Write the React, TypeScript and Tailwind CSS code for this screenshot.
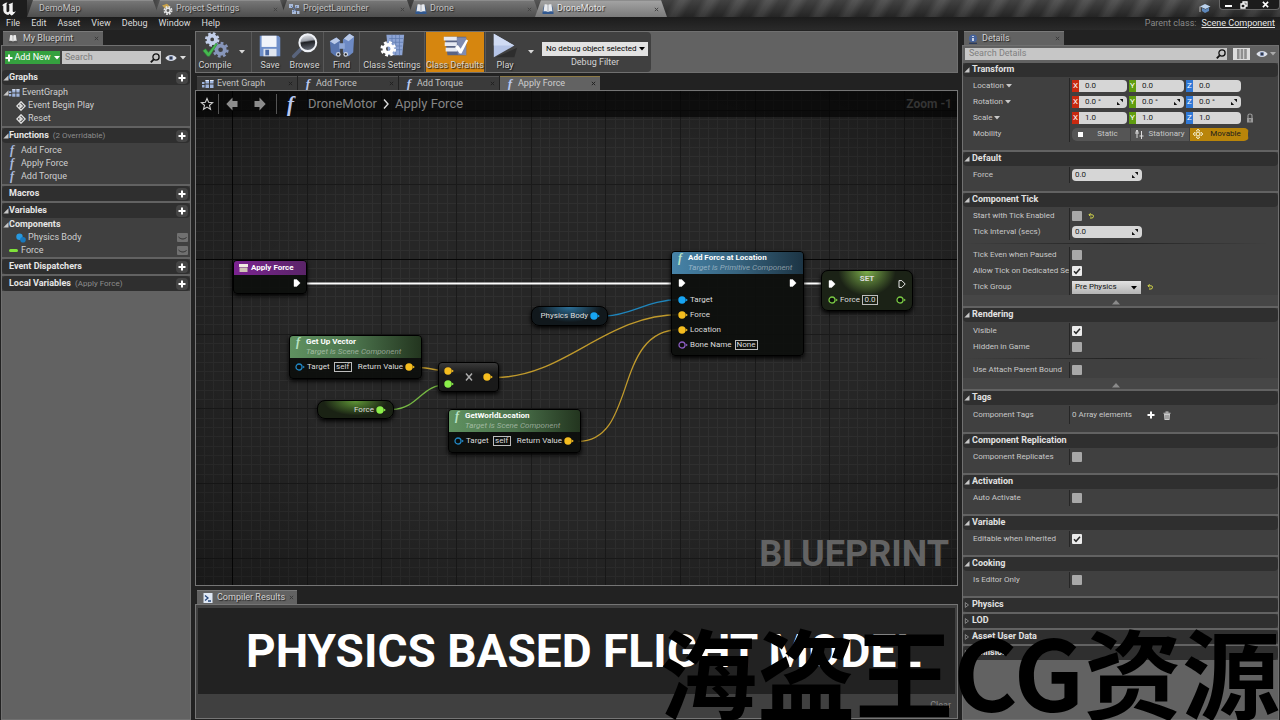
import { useState } from 'react';
import type { ReactNode } from 'react';
import clsx from 'clsx';

type IconProps = { className?: string };

/* ---------- icons ---------- */

function FunctionIcon({ className }: IconProps) {
  return (
    <span aria-hidden="true" className={clsx("font-['Liberation_Serif',serif] font-bold italic", className)}>
      f
    </span>
  );
}

function EngineLogo() {
  return (
    <svg viewBox="0 0 18 14" className="ml-px h-3.5 w-[18px]" fill="#f2f2f2" aria-hidden="true">
      <path d="M1 3.5C2.5 1.8 4 .9 6.6.6 5.6 1.4 5.5 2 5.5 3v6c0 1 .9 1.4 1.7 1 .6-.3.9-.6 1.1-.9V3.6c0-.8-.3-1.1-1-1.3C9 2 10.6 1.4 12 .5c-.3.8-.3 1.3-.3 2v6.6c0 .8.5 1.2 1.5.8.7-.2 1.2-.6 1.6-1-.9 2.2-2.6 3.900-4.500 4.600L8.600 11.700 7.300 13C4.600 12.700 2.500 11.100 2.300 8.600V4.400C2.300 3.500 1.900 3.300 1 3.500z" />
    </svg>
  );
}

function BookIcon({ className }: IconProps) {
  return (
    <svg viewBox="0 0 12 12" className={className} aria-hidden="true">
      <path d="M.5 9.500 2 2.500h8l1.500 7v1.500H.5z" fill="#31588f" />
      <path d="M1.500 8.500 2.500 1.500C4 1 5 1.200 6 2c1-.8 2-1 3.500-.5l1 7C9 8 7 8 6 9 5 8 3 8 1.500 8.500z" fill="#e8eaee" />
      <path d="M6 2v6.500" stroke="#8a8f9a" strokeWidth=".7" />
    </svg>
  );
}

function GearTabIcon({ className }: IconProps) {
  return (
    <svg viewBox="0 0 12 12" className={className} aria-hidden="true">
      <path d="M1 2.500 6 .8l3 2.700-5 2z" fill="#c9a24a" />
      <circle cx="7" cy="7.500" r="3.600" fill="none" stroke="#e6e6e6" strokeWidth="1.800" strokeDasharray="1.700 1.130" />
      <circle cx="7" cy="7.500" r="2.200" fill="none" stroke="#e6e6e6" strokeWidth="1.500" />
    </svg>
  );
}

function LauncherIcon({ className }: IconProps) {
  return (
    <svg viewBox="0 0 12 12" className={className} fill="#a9bad8" aria-hidden="true">
      <path d="M1 1h4v4H1zM7 2h4v3H7zM4 7h4v4H4zM9 8h2.500v3H9z" />
      <path d="M3 3l6 6M9 3 5 9" stroke="#5f78a8" fill="none" />
    </svg>
  );
}

function EventGraphIcon({ className }: IconProps) {
  return (
    <svg viewBox="0 0 12 10" className={className} aria-hidden="true">
      <path d="M0 3h2.500v2H0zM3.500 1h3.500v3.500h-3.500zM8 1h3.500v3.500h-3.500zM0 6h2.500v2.500H0zM3.500 5.500h3.500v3.500h-3.500zM8 5.500h3.500v3.500h-3.500z" fill="#9fb4dc" />
      <path d="M3.500 1h3.500v1h-3.500zM8 1h3.500v1h-3.500z" fill="#e4ebf8" />
    </svg>
  );
}

function EyeIcon({ className }: IconProps) {
  return (
    <svg viewBox="0 0 12 8" className={className} aria-hidden="true">
      <path d="M.3 4C3 0 9 0 11.700 4 9 8 3 8 .3 4z" fill="#dfe3ec" />
      <circle cx="6" cy="4" r="2.200" fill="#6f7fa3" />
      <circle cx="6" cy="4" r="1" fill="#20242e" />
    </svg>
  );
}

function Magnifier({ className }: IconProps) {
  return (
    <svg viewBox="0 0 10 10" className={className} fill="none" stroke="#111" aria-hidden="true">
      <circle cx="6" cy="4" r="3.100" strokeWidth="1.300" />
      <path d="M3.700 6.400.8 9.300" strokeWidth="1.900" />
    </svg>
  );
}

function Caret({ className }: IconProps) {
  return (
    <svg viewBox="0 0 6 4" className={clsx('h-1 w-1.5 shrink-0', className)} fill="currentColor" aria-hidden="true">
      <path d="M0 0h6L3 3.600z" />
    </svg>
  );
}

function OpenMark({ open = true }: { open?: boolean }) {
  return (
    <svg viewBox="0 0 6 6" className="h-1.5 w-1.5 shrink-0" aria-hidden="true">
      {open ? <path d="M5.500 .3v5.200H.3z" fill="#c8c8c8" /> : <path d="M1.300.6v4.800L4.500 3z" fill="none" stroke="#9a9a9a" strokeWidth=".8" />}
    </svg>
  );
}

function Plus({ className }: IconProps) {
  return (
    <svg viewBox="0 0 8 8" className={clsx('h-2 w-2', className)} fill="#fff" aria-hidden="true">
      <path d="M3 .5h2V3h2.500v2H5v2.500H3V5H.5V3H3z" />
    </svg>
  );
}

function CloseMark({ className }: IconProps) {
  return (
    <svg viewBox="0 0 6 6" className={clsx('h-[5px] w-[5px] shrink-0', className)} stroke="currentColor" strokeWidth="1.200" aria-hidden="true">
      <path d="m1 1 4 4M5 1 1 5" />
    </svg>
  );
}

function SpinMark() {
  return (
    <svg viewBox="0 0 6 6" className="pointer-events-none absolute right-1 top-[3px] h-1.5 w-1.5" fill="#111" aria-hidden="true">
      <path d="M2.800 0H6v3.200zM3.200 6H0V2.800z" />
    </svg>
  );
}

function ResetArrow() {
  return (
    <svg viewBox="0 0 6 6" className="h-1.5 w-1.5" fill="none" stroke="#d6d84a" strokeWidth="1" aria-hidden="true">
      <path d="M1 1.800h3.200q1.300 0 1.300 1.500T4 5H2M2.600.2 1 1.800l1.600 1.600" />
    </svg>
  );
}

function CompileIcon() {
  return (
    <svg viewBox="0 0 30 30" className="h-7 w-7" aria-hidden="true">
      <circle cx="12" cy="8" r="4" fill="none" stroke="#c3cfea" strokeWidth="4" />
      <circle cx="12" cy="8" r="6.500" fill="none" stroke="#c3cfea" strokeWidth="2.500" strokeDasharray="2.800 2.300" />
      <circle cx="21" cy="19" r="4.500" fill="none" stroke="#8796bb" strokeWidth="4" />
      <circle cx="21" cy="19" r="7.300" fill="none" stroke="#8796bb" strokeWidth="2.600" strokeDasharray="3 2.700" />
      <path d="M2 20l3-2 3 4 8-10 1.500 1L9 26H7z" fill="#46b84f" stroke="#2d8a38" strokeWidth=".6" />
    </svg>
  );
}

function SaveIcon() {
  return (
    <svg viewBox="0 0 30 30" className="h-7 w-7" aria-hidden="true">
      <path d="M4 4h20l2 2v20H4z" fill="#6f8fc9" />
      <path d="M6 4h16v12H6z" fill="#f1f4fa" />
      <path d="M8 18h14v8H8z" fill="#dfe5f0" />
      <path d="M10 19h4v6h-4z" fill="#4c6aa5" />
    </svg>
  );
}

function BrowseIcon() {
  return (
    <svg viewBox="0 0 30 30" className="h-7 w-7" aria-hidden="true">
      <defs>
        <linearGradient id="lens" x1="0" y1="0" x2=".15" y2="1">
          <stop offset="0" stopColor="#f4f5f8" />
          <stop offset=".42" stopColor="#9ea3ac" />
          <stop offset=".52" stopColor="#1f2126" />
          <stop offset="1" stopColor="#666c78" />
        </linearGradient>
      </defs>
      <path d="M11 18 3 26" stroke="#59647c" strokeWidth="4" strokeLinecap="round" />
      <circle cx="18" cy="11.500" r="9" fill="url(#lens)" stroke="#eef1f6" strokeWidth="2.200" />
    </svg>
  );
}

function FindIcon() {
  return (
    <svg viewBox="0 0 30 30" className="h-7 w-7" aria-hidden="true">
      <path d="M2 10l7-4 4 3v14l-5 3-5-4z" fill="#5874ad" />
      <path d="M16 8l7-6 5 3-1 17-5 4-6-4z" fill="#6d8ac4" />
      <path d="M2 10l7-4 4 3-6 4zM17 7l6-5 5 3-6 5z" fill="#b9c9e8" />
      <path d="M12 12h6v6h-6z" fill="#8fa7d6" />
      <circle cx="11" cy="24" r="2.500" fill="#cfd6e3" />
      <circle cx="11" cy="24" r="1.200" fill="#222" />
      <circle cx="19" cy="24" r="2.500" fill="#cfd6e3" />
      <circle cx="19" cy="24" r="1.200" fill="#222" />
    </svg>
  );
}

function ClassSettingsIcon() {
  return (
    <svg viewBox="0 0 30 30" className="h-7 w-7" aria-hidden="true">
      <path d="M9 3h19l-2 22H11z" fill="#8da4d4" />
      <path d="M12 7h15M12 11h15M12 15h14M12 19h14M15 3v22M19 3v22M23 3v22" stroke="#5f7ab0" strokeWidth=".8" />
      <circle cx="11" cy="18" r="4.300" fill="none" stroke="#fff" strokeWidth="3.800" />
      <circle cx="11" cy="18" r="7" fill="none" stroke="#fff" strokeWidth="2.800" strokeDasharray="3 2.500" />
    </svg>
  );
}

function ClassDefaultsIcon() {
  return (
    <svg viewBox="0 0 30 30" className="h-7 w-7" aria-hidden="true">
      <path d="M4 5h23v20H7z" fill="#5a6484" />
      <path d="M3 5h14v4H3zM4 11h13v4H4zM5 17h13v4H5z" fill="#e6e9f2" />
      <path d="M17 6h10v19l-9-1z" fill="#7f8bb0" />
      <path d="m15 16 3-2 3 4 6-10 2 1-7 14h-2z" fill="#fff" />
    </svg>
  );
}

function PlayIcon() {
  return (
    <svg viewBox="0 0 30 30" className="h-7 w-7" aria-hidden="true">
      <path d="M5 27h20l3-10z" fill="#222" opacity=".6" />
      <path d="M3 2v25l22-12.500z" fill="#b5c4e6" />
      <path d="M3 2v12.500h22z" fill="#d0dbf3" />
    </svg>
  );
}

/* ---------- top of the window ---------- */

const windowTabs = [
  { label: 'DemoMap', icon: null },
  { label: 'Project Settings', icon: <GearTabIcon className="h-3 w-3" /> },
  { label: 'ProjectLauncher', icon: <LauncherIcon className="h-3 w-3" /> },
  { label: 'Drone', icon: <BookIcon className="h-3 w-3" /> },
  { label: 'DroneMotor', icon: <BookIcon className="h-3 w-3" />, active: true },
];

function TitleBar() {
  return (
    <header className="flex h-[17px] shrink-0 items-stretch bg-[repeating-linear-gradient(120deg,#2a2a2a99_0px,#2a2a2a99_8px,#4a4a4a99_14px,#4a4a4a99_18px,#2a2a2a99_25px),linear-gradient(#666,#1c1c1c)]">
      <div className="flex w-[27px] items-center bg-[#1d1d1d]">
        <EngineLogo />
      </div>
      <nav className="flex" aria-label="Open assets">
        {windowTabs.map((tab) => (
          <button
            key={tab.label}
            className={clsx(
              '-mr-[5px] flex w-[132px] items-center gap-[3px] border-t border-[#8c8c8c] pl-[7px] pr-2 text-left text-[9px] [clip-path:polygon(6px_0,calc(100%-6px)_0,100%_100%,0_100%)]',
              tab.active ? 'bg-gradient-to-b from-[#a2a2a2] to-[#7b7b7b] text-[#e6e6e6]' : 'bg-gradient-to-b from-[#767676] to-[#4e4e4e] text-[#c4c4c4]',
            )}
          >
            {tab.icon ?? <span className="w-0.5" />}
            <span className="[text-shadow:1px_1px_1px_#222]">{tab.label}</span>
            <CloseMark className={clsx('ml-auto', tab.icon ? 'text-[#444]' : 'text-transparent')} />
          </button>
        ))}
      </nav>
      <div className="ml-auto flex items-start">
        <svg viewBox="0 0 12 12" className="mr-2 mt-0.5 h-3 w-3" aria-hidden="true">
          <path d="M1 4.500 6 2l5.500 2.500L6.500 7z" fill="#bcd3ee" />
          <path d="M3 6v3l3 2 4-2V5.500L6.500 7.500z" fill="#5d87bb" />
          <path d="M1 4.500V10" stroke="#ddd" strokeWidth=".8" />
        </svg>
        <div className="flex h-2.5 rounded-b-sm border border-t-0 border-[#666] bg-[#1c1c1c]">
          <button aria-label="Minimize" className="flex w-4 items-center justify-center">
            <span className="mt-0.5 h-0.5 w-[7px] bg-white" />
          </button>
          <button aria-label="Restore" className="flex w-4 items-center justify-center">
            <svg viewBox="0 0 8 8" className="h-2 w-2" fill="none" stroke="#fff" strokeWidth="1.300" aria-hidden="true">
              <path d="M1 3h4v4H1zM3 3V1h4v4H5" />
            </svg>
          </button>
          <button aria-label="Close" className="flex w-[27px] items-center justify-center">
            <svg viewBox="0 0 8 8" className="h-[7px] w-[7px]" stroke="#fff" strokeWidth="1.800" aria-hidden="true">
              <path d="m1 1 6 6M7 1 1 7" />
            </svg>
          </button>
        </div>
      </div>
    </header>
  );
}

function MenuBar() {
  return (
    <div className="flex h-[13px] shrink-0 items-center justify-between bg-gradient-to-b from-[#1c1c1c] to-[#2a2a2a] pl-1.5 pr-[5px] text-[9px] text-[#dcdcdc]">
      <nav className="flex gap-[11px]" aria-label="Main menu">
        {['File', 'Edit', 'Asset', 'View', 'Debug', 'Window', 'Help'].map((item) => (
          <button key={item}>{item}</button>
        ))}
      </nav>
      <p className="flex gap-[5px] text-[#8a8a8a]">
        Parent class:
        <a href="#scene-component" className="text-[#e6e6e6] underline">
          Scene Component
        </a>
      </p>
    </div>
  );
}

function PanelTab({ icon, label, className }: { icon: ReactNode; label: string; className?: string }) {
  return (
    <div className={clsx('flex h-3.5 w-[100px] shrink-0 items-center gap-1 border-t border-[#7a7a7a] bg-[#626262] px-1 text-[9px] text-[#d2d2d2]', className)}>
      {icon}
      <span className="whitespace-nowrap [text-shadow:1px_1px_1px_#222]">{label}</span>
      <CloseMark className="ml-auto text-[#3c3c3c]" />
    </div>
  );
}

/* ---------- left: My Blueprint ---------- */

function ListSection({ title, note, open, children, className }: { title: string; note?: string; open?: boolean; children?: ReactNode; className?: string }) {
  return (
    <section className="bg-[#404040]">
      <div className="flex h-[15px] items-center rounded-sm bg-[#2f2f2f]">
        <span className="flex w-[7px] justify-center">{open && <OpenMark />}</span>
        <h2 className="text-[9px] font-bold text-[#e6e6e6]">{title}</h2>
        {note && <span className="ml-1 text-[8px] text-[#8c8c8c]">{note}</span>}
        <button aria-label={`Add to ${title}`} className="ml-auto mr-0.5 flex h-3 w-3 items-center justify-center rounded-sm bg-[#454545]">
          <Plus />
        </button>
      </div>
      {children && <ul className={clsx('text-[9px] leading-[13px] text-[#cfcfcf]', className)}>{children}</ul>}
    </section>
  );
}

function ClosedEye() {
  return (
    <button aria-label="Toggle visibility" className="ml-auto mr-0.5 flex h-[9px] w-[11px] items-center rounded-[1px] bg-[#707070]">
      <svg viewBox="0 0 11 9" className="h-[9px] w-[11px]" fill="none" stroke="#2c2c2c" aria-hidden="true">
        <path d="M1.500 4C4 6.500 7 6.500 9.500 4.500" />
      </svg>
    </button>
  );
}

function MyBlueprint() {
  return (
    <aside className="flex w-48 shrink-0 flex-col pl-px pr-px pt-px">
      <PanelTab icon={<BookIcon className="h-2.5 w-3 grayscale" />} label="My Blueprint" className="ml-0.5" />
      <div className="flex-1 border border-[#707070] bg-[#626262]">
        <div className="flex items-center bg-[#404040] pb-1.5 pl-[3px] pt-[5px]">
          <button className="flex h-[13px] w-[55px] items-center justify-center gap-px bg-[#35a13f] text-[9px] text-white">
            <Plus />
            Add New
            <Caret className="ml-0.5" />
          </button>
          <div className="relative ml-0.5 flex">
            <input type="search" aria-label="Search blueprint" placeholder="Search" className="h-[13px] w-[99px] bg-[#c6c6c6] pl-[3px] text-[9px] text-black placeholder:text-[#7b7b7b]" />
            <Magnifier className="absolute right-px top-0.5 h-2.5 w-2.5" />
          </div>
          <button aria-label="View options" className="ml-1 flex items-center gap-[3px] text-[#ddd]">
            <EyeIcon className="h-2 w-3" />
            <Caret />
          </button>
        </div>
        <div className="flex flex-col gap-0.5">
          <ListSection title="Graphs" open className="py-px">
            <li className="flex items-center">
              <span className="flex w-[7px] justify-center">
                <OpenMark />
              </span>
              <EventGraphIcon className="mr-0.5 h-2.5 w-[11px]" />
              EventGraph
            </li>
            {['Event Begin Play', 'Reset'].map((item) => (
              <li key={item} className="flex items-center gap-0.5 pl-3.5">
                <svg viewBox="0 0 10 10" className="h-2.5 w-2.5" fill="none" stroke="#e0e0e0" strokeWidth="1.300" aria-hidden="true">
                  <path d="M5 .8 9.200 5 5 9.200.8 5zM4 3l2.200 2L4 7z" />
                </svg>
                {item}
              </li>
            ))}
          </ListSection>
          <ListSection title="Functions" note="(2 Overridable)" open className="py-px">
            {['Add Force', 'Apply Force', 'Add Torque'].map((item) => (
              <li key={item} className="flex pl-2">
                <FunctionIcon className="w-[11px] text-[12px] text-[#aab9dd]" />
                {item}
              </li>
            ))}
          </ListSection>
          <ListSection title="Macros" />
          <ListSection title="Variables" open>
            <li className="flex items-center font-bold text-[#e6e6e6]">
              <span className="flex w-[7px] justify-center">
                <OpenMark />
              </span>
              Components
            </li>
            <li className="flex items-center gap-0.5 pl-3.5">
              <svg viewBox="0 0 10 10" className="h-2.5 w-2.5" aria-hidden="true">
                <circle cx="3.500" cy="3.800" r="3.200" fill="#2799e0" />
                <circle cx="7" cy="6.800" r="2.800" fill="#1878bd" />
              </svg>
              Physics Body
              <ClosedEye />
            </li>
            <li className="flex items-center gap-[3px] pl-[7px]">
              <span className="h-[3px] w-[9px] rounded-full bg-[#7fe23a]" />
              <span>Force</span>
              <ClosedEye />
            </li>
          </ListSection>
          <ListSection title="Event Dispatchers" />
          <ListSection title="Local Variables" note="(Apply Force)" />
        </div>
      </div>
    </aside>
  );
}

/* ---------- centre: toolbar and graph ---------- */

function ToolButton({ icon, label, className }: { icon: ReactNode; label: string; className?: string }) {
  return (
    <button className={clsx('flex shrink-0 flex-col items-center text-[9px] leading-[10px] text-[#d4d4d4] [text-shadow:1px_1px_1px_#1a1a1a]', className)}>
      {icon}
      {label}
    </button>
  );
}

function ToolDivider() {
  return <span className="mx-px w-px shrink-0 bg-[#585858]" />;
}

function Toolbar() {
  return (
    <div className="flex h-[42px] shrink-0 border border-[#707070] bg-[#626262]">
      <div className="flex rounded-r-sm bg-[#404040]">
        <ToolButton icon={<CompileIcon />} label="Compile" className="w-[38px]" />
        <button aria-label="Compile options" className="flex w-4 items-center justify-center text-[#d8d8d8]">
          <Caret />
        </button>
        <ToolDivider />
        <ToolButton icon={<SaveIcon />} label="Save" className="w-[34px]" />
        <ToolButton icon={<BrowseIcon />} label="Browse" className="w-[35px]" />
        <ToolDivider />
        <ToolButton icon={<FindIcon />} label="Find" className="w-[33px]" />
        <ToolDivider />
        <ToolButton icon={<ClassSettingsIcon />} label="Class Settings" className="w-[62px]" />
        <ToolDivider />
        <ToolButton icon={<ClassDefaultsIcon />} label="Class Defaults" className="w-[58px] bg-[#d6860f]" />
        <ToolDivider />
        <ToolButton icon={<PlayIcon />} label="Play" className="w-9" />
        <button aria-label="Play options" className="flex w-4 items-center justify-center text-[#d8d8d8]">
          <Caret />
        </button>
        <div className="flex flex-col items-center pl-[3px] pr-[3px] pt-2.5">
          <div className="relative flex">
            <select id="debug-filter" className="h-3.5 w-[106px] appearance-none bg-[#e2e2e2] pl-1 text-[8px] leading-[14px] text-black">
              <option>No debug object selected</option>
            </select>
            <Caret className="pointer-events-none absolute right-[3px] top-[5px] text-black" />
          </div>
          <label htmlFor="debug-filter" className="text-[9px] leading-[12px] text-[#d4d4d4]">
            Debug Filter
          </label>
        </div>
      </div>
    </div>
  );
}

function GraphTabs() {
  const [current, setCurrent] = useState('Apply Force');
  return (
    <nav className="mt-[3px] flex shrink-0 gap-px pl-0.5" aria-label="Graphs">
      {['Event Graph', 'Add Force', 'Add Torque', 'Apply Force'].map((name) => (
        <button
          key={name}
          onClick={() => setCurrent(name)}
          className={clsx(
            'flex h-3.5 w-[100px] items-center gap-[3px] border-t pl-[5px] pr-1 text-[9px]',
            name === current ? 'border-[#8d7a45] bg-[#626262] text-[#cfcfcf]' : 'border-[#555] bg-[#3a3a3a] text-[#c2c2c2]',
          )}
        >
          {name === 'Event Graph' ? <EventGraphIcon className="h-2.5 w-3" /> : <FunctionIcon className="w-2.5 text-[13px] leading-[12px] text-[#b9c8f0]" />}
          {name}
          <CloseMark className="ml-auto text-[#222]" />
        </button>
      ))}
    </nav>
  );
}

function Pin({ color, hollow }: { color: string; hollow?: boolean }) {
  return (
    <svg viewBox="0 0 10 8" className="h-2 w-2.5 shrink-0" aria-hidden="true">
      <circle cx="4" cy="4" r={hollow ? 3 : 3.7} fill={hollow ? '#0b0d0b' : color} stroke={hollow ? color : 'none'} strokeWidth="1.300" />
      <path d="M7.800 2.400 9.800 4 7.800 5.600z" fill={color} />
    </svg>
  );
}

function ExecPin({ hollow }: { hollow?: boolean }) {
  return (
    <svg viewBox="0 0 8 8" className="h-2 w-2 shrink-0" aria-hidden="true">
      <path d="M1 .6h2.800L7.200 4 3.800 7.400H1z" fill={hollow ? 'none' : '#fff'} stroke="#fff" strokeWidth={hollow ? 0.9 : 0.4} />
    </svg>
  );
}

function PinBox({ value, label, className = 'w-[18px]' }: { value: string; label: string; className?: string }) {
  return <input aria-label={label} defaultValue={value} size={1} className={clsx('h-2.5 border border-[#bdbdbd] bg-transparent text-center text-[8px] text-[#ddd]', className)} />;
}

const nodeBox = 'absolute overflow-hidden rounded-[4px] border border-black bg-[#0c0e0c]/90 text-[8px] leading-[10px] text-[#dcdcdc] shadow-[0_2px_4px_#000]';

function NodeHeader({ title, subtitle, className }: { title: string; subtitle: string; className: string }) {
  return (
    <div className={clsx('flex h-[22px] gap-1 pl-1.5 pt-px', className)}>
      <FunctionIcon className="w-1.5 text-[12px] leading-[10px] text-[#b8e2c4]" />
      <div>
        <h3 className="font-bold text-white">{title}</h3>
        <p className="whitespace-nowrap italic text-white/45">{subtitle}</p>
      </div>
    </div>
  );
}

function VectorNode({ title, className }: { title: string; className: string }) {
  return (
    <article className={clsx(nodeBox, className)}>
      <NodeHeader title={title} subtitle="Target is Scene Component" className="bg-gradient-to-r from-[#5f9160] via-[#4b734c] to-[#23351f]" />
      <div className="flex items-center pl-[5px] pr-1.5 pt-1">
        <Pin color="#2187c4" hollow />
        <span className="ml-0.5 mr-1">Target</span>
        <PinBox value="self" label={`${title} target`} />
        <span className="ml-auto mr-0.5">Return Value</span>
        <Pin color="#f5bd1f" />
      </div>
    </article>
  );
}

const ORIGIN_X = 36;
const ORIGIN_Y = 168;
const CELL = 9.333;

// lines snap to whole pixels so that they stay crisp; every eighth one is a major line
function gridPath(major: boolean) {
  let d = '';
  for (let i = -24; i < 400; i++) {
    if ((i % 8 === 0) !== major) continue;
    const x = Math.round(ORIGIN_X + i * CELL) + 0.5;
    const y = Math.round(ORIGIN_Y + i * CELL) + 0.5;
    if (x > 0) d += `M${x} 0v2400`;
    if (y > 0) d += `M0 ${y}h4000`;
  }
  return d;
}

function GraphGrid() {
  return (
    <svg className="absolute inset-0 h-full w-full" aria-hidden="true">
      <defs>
        <radialGradient id="vignette" r=".75">
          <stop offset=".5" stopColor="#000" stopOpacity="0" />
          <stop offset="1" stopColor="#000" stopOpacity=".4" />
        </radialGradient>
      </defs>
      <rect width="100%" height="100%" fill="#262626" />
      <path d={gridPath(false)} stroke="#2f2f2f" />
      <path d={gridPath(true)} stroke="#1a1a1a" />
      <path d="M36.500 0v2400M0 168.500h4000" stroke="#050505" />
      <rect width="100%" height="100%" fill="url(#vignette)" />
      <g fill="none" strokeWidth="1.300" transform="translate(-196 -91)">
        <path d="M307 283.500h365M804 283.500h22" stroke="#fff" strokeWidth="2" />
        <path d="M606 316C632 315 648 299.500 680 299.500" stroke="#1f86bd" />
        <path d="M495 377.500C565 377.500 605 314.500 680 314.500" stroke="#c09a2c" />
        <path d="M578 441.500C638 441.500 612 329.500 680 329.500" stroke="#c09a2c" />
        <path d="M420 367.500C430 368 438 371 448 371" stroke="#c09a2c" />
        <path d="M392 409.500C420 408 420 384.500 448 384.500" stroke="#76b843" />
      </g>
    </svg>
  );
}

function GraphCanvas() {
  return (
    <main className="relative min-h-0 flex-1 overflow-hidden border border-[#757575]">
      <GraphGrid />
      <div className="relative flex h-[26px] items-center bg-black/60 pr-[5px] text-[13px] text-[#858585]">
        <button aria-label="Favorite" className="flex w-[22px] items-center justify-center">
          <svg viewBox="0 0 14 14" className="h-3.5 w-3.5" fill="none" stroke="#d0d0d0" strokeWidth="1.100" aria-hidden="true">
            <path d="m7 1.500 1.600 3.800 4.100.3-3.200 2.700 1 4L7 10.100 3.500 12.300l1-4L1.300 5.600l4.100-.3z" />
          </svg>
        </button>
        <span className="h-5 w-px bg-[#555]" />
        <button aria-label="Back" className="flex w-[26px] justify-center">
          <svg viewBox="0 0 12 14" className="h-3.5 w-3" fill="#8d8d8d" aria-hidden="true">
            <path d="M.3 7 6.500.5V4h5v6h-5v3.500z" />
          </svg>
        </button>
        <button aria-label="Forward" className="flex w-[30px] justify-center">
          <svg viewBox="0 0 12 14" className="h-3.5 w-3" fill="#8d8d8d" aria-hidden="true">
            <path d="M11.700 7 5.500.5V4h-5v6h5v3.500z" />
          </svg>
        </button>
        <span className="ml-px h-5 w-px bg-[#555]" />
        <FunctionIcon className="ml-2.5 w-[21px] text-[21px] leading-[20px] text-[#b9c8f0]" />
        <span>DroneMotor</span>
        <svg viewBox="0 0 8 12" className="mx-[5px] h-3 w-2" fill="none" stroke="#ddd" strokeWidth="1.400" aria-hidden="true">
          <path d="m2 1.500 4 4.500-4 4.500" />
        </svg>
        <span>Apply Force</span>
        <span className="ml-auto text-[12px] font-bold text-[#343434]">Zoom -1</span>
      </div>

      <article className={clsx(nodeBox, 'left-[37px] top-[169px] h-[34px] w-[74px]')}>
        <h3 className="flex h-3.5 items-center gap-[3px] bg-gradient-to-r from-[#7b2391] to-[#5a2468] pl-[5px] font-bold text-white">
          <svg viewBox="0 0 9 8" className="h-2 w-[9px]" aria-hidden="true">
            <path d="M0 0h9v3H0z" fill="#f1ebe2" />
            <path d="M.5 3.500h8V8h-8z" fill="#cfc4b6" />
          </svg>
          Apply Force
        </h3>
        <div className="flex justify-end pr-[5px] pt-1">
          <ExecPin />
        </div>
      </article>

      <VectorNode title="Get Up Vector" className="left-[93px] top-[244px] h-[44px] w-[133px]" />
      <VectorNode title="GetWorldLocation" className="left-[252px] top-[318px] h-[44px] w-[133px]" />

      <article className={clsx(nodeBox, 'left-[121px] top-[309px] flex h-[19px] w-[77px] items-center justify-end gap-0.5 rounded-[8px] bg-[radial-gradient(ellipse_at_50%_0%,#5f9636,#1a2214_60%)] pr-[7px]')}>
        Force
        <Pin color="#8cf04a" />
      </article>
      <article className={clsx(nodeBox, 'left-[335px] top-[215px] flex h-[20px] w-[77px] items-center justify-end gap-0.5 rounded-[8px] bg-[radial-gradient(ellipse_at_50%_0%,#2b6f98,#11181c_60%)] pr-[7px]')}>
        Physics Body
        <Pin color="#17a4f2" />
      </article>

      <article className={clsx(nodeBox, 'left-[242px] top-[271px] flex h-[30px] w-[61px] items-center justify-between bg-gradient-to-b from-[#3a3a3a] to-[#1a1a1a] to-40% pl-[5px] pr-[5px]')}>
        <div className="flex flex-col gap-[5px]">
          <Pin color="#f5bd1f" />
          <Pin color="#8cf04a" />
        </div>
        <svg viewBox="0 0 8 8" className="h-2 w-2" stroke="#aaa" strokeWidth="1.500" aria-hidden="true">
          <path d="m1 .5 6 7M7 .5l-6 7" />
        </svg>
        <Pin color="#f5bd1f" />
      </article>

      <article className={clsx(nodeBox, 'left-[475px] top-[160px] h-[105px] w-[133px]')}>
        <NodeHeader title="Add Force at Location" subtitle="Target is Primitive Component" className="bg-gradient-to-r from-[#4683a8] via-[#37647f] to-[#1c3444]" />
        <div className="flex justify-between pb-1 pl-1.5 pr-1.5 pt-[5px]">
          <ExecPin />
          <ExecPin />
        </div>
        <ul className="flex flex-col gap-[5px] pl-1.5 pt-1">
          <li className="flex items-center gap-0.5">
            <Pin color="#17a4f2" />
            Target
          </li>
          <li className="flex items-center gap-0.5">
            <Pin color="#f5bd1f" />
            Force
          </li>
          <li className="flex items-center gap-0.5">
            <Pin color="#f5bd1f" />
            Location
          </li>
          <li className="flex items-center gap-0.5">
            <Pin color="#8a5cc0" hollow />
            <span className="mr-px">Bone Name</span>
            <PinBox label="Bone Name" value="None" className="w-[23px]" />
          </li>
        </ul>
      </article>

      <article className={clsx(nodeBox, 'left-[625px] top-[179px] h-[41px] w-[92px] rounded-[7px] bg-[radial-gradient(ellipse_at_50%_0%,#7cae4a,#1b2216_45%)] px-1.5 pt-[3px]')}>
        <h3 className="text-center font-bold">SET</h3>
        <div className="-mt-1 flex justify-between">
          <ExecPin />
          <ExecPin hollow />
        </div>
        <div className="flex items-center pt-[7px]">
          <Pin color="#79c843" hollow />
          <span className="ml-0.5 mr-0.5">Force</span>
          <PinBox label="Set force value" value="0.0" className="w-4" />
          <span className="ml-auto flex">
            <Pin color="#79c843" hollow />
          </span>
        </div>
      </article>

      <p className="absolute bottom-2 right-2 text-[36px] font-bold leading-[46px] text-[#636363]">BLUEPRINT</p>
    </main>
  );
}

function CompilerResults() {
  return (
    <section className="mt-1 shrink-0">
      <PanelTab
        icon={
          <svg viewBox="0 0 10 10" className="ml-0.5 h-2.5 w-2.5 shrink-0" aria-hidden="true">
            <path d="M.5 0h9v10h-9z" fill="#dfe8f5" />
            <path d="m2 2.500 3 2.500-3 2.500M5 8h3" fill="none" stroke="#29487c" strokeWidth="1.300" />
          </svg>
        }
        label="Compiler Results"
        className="ml-0.5"
      />
      <div className="border border-[#757575] bg-[#404040] px-0.5 pt-[3px]">
        <h1 className="bg-[#222] pl-12 text-[46px] font-bold leading-[86px] text-white">PHYSICS BASED FLIGHT MODEL</h1>
        <div className="flex h-6 justify-end pr-1">
          <button className="text-[9px] text-[#8a8a8a]">Clear</button>
        </div>
      </div>
    </section>
  );
}

/* ---------- right: Details ---------- */

function DetailSection({ title, collapsed, children }: { title: string; collapsed?: boolean; children?: ReactNode }) {
  return (
    <section className="bg-[#404040]">
      <h2 className="flex h-3.5 items-center gap-0.5 rounded-sm bg-[#2f2f2f] pl-px text-[9px] font-bold text-[#e2e2e2]">
        <OpenMark open={!collapsed} />
        {title}
      </h2>
      {children && <div className="pb-2 pt-px">{children}</div>}
    </section>
  );
}

function Row({ label, htmlFor, menu, className, children }: { label: string; htmlFor?: string; menu?: boolean; className?: string; children: ReactNode }) {
  return (
    <div className={clsx('flex', className ?? 'h-4')}>
      <label htmlFor={htmlFor} className="flex w-[107px] shrink-0 items-center gap-0.5 overflow-hidden whitespace-nowrap border-r border-[#262626] pl-2.5 text-[8px] text-[#c8c8c8]">
        {label}
        {menu && <Caret className="text-[#c8c8c8]" />}
      </label>
      <div className="flex items-center pl-0.5 text-[8px]">{children}</div>
    </div>
  );
}

function Check({ id, on }: { id: string; on?: boolean }) {
  const [checked, setChecked] = useState(!!on);
  return (
    <span className="relative flex">
      <input id={id} type="checkbox" checked={checked} onChange={(e) => setChecked(e.target.checked)} className="h-2.5 w-2.5 appearance-none rounded-[1px] bg-[#a8a8a8] checked:bg-[#ececec]" />
      {checked && (
        <svg viewBox="0 0 10 10" className="pointer-events-none absolute inset-0 h-2.5 w-2.5" fill="none" stroke="#2a2a2a" strokeWidth="1.500" aria-hidden="true">
          <path d="m2 5.300 2 2L8 2.700" />
        </svg>
      )}
    </span>
  );
}

function NumberField({ id, value, spin }: { id: string; value: string; spin?: boolean }) {
  return (
    <span className="relative flex">
      <input id={id} defaultValue={value} className="h-3 w-[70px] rounded-sm bg-[#d6d6d6] pl-[3px] text-[8px] text-[#222]" />
      {spin && <SpinMark />}
    </span>
  );
}

const axes = [
  { name: 'X', color: 'bg-[#c9290f]' },
  { name: 'Y', color: 'bg-[#5f9d10]' },
  { name: 'Z', color: 'bg-[#2f78d6]' },
];

function VectorField({ id, value, spin }: { id: string; value: string; spin?: boolean }) {
  return (
    <div className="flex gap-0.5">
      {axes.map((axis, i) => (
        <span key={axis.name} className="relative flex">
          <span className={clsx('h-3 w-[7px] text-center text-[8px] leading-[12px] text-white', axis.color)}>{axis.name}</span>
          <input id={i === 0 ? id : undefined} aria-label={`${id} ${axis.name}`} defaultValue={value} className="h-3 w-12 rounded-r-sm bg-[#d6d6d6] pl-1.5 text-[8px] text-[#222]" />
          {spin && <SpinMark />}
        </span>
      ))}
    </div>
  );
}

function Mobility() {
  const [value, setValue] = useState('Movable');
  const options = [
    { name: 'Static', icon: <path d="M3 3h5v5H3z" fill="#fff" /> },
    { name: 'Stationary', icon: <path d="M3 1v8M7.500 2v8M1 4h4M5.500 7h4M2 3l1-2 1 2" fill="none" stroke="#ddd" /> },
    { name: 'Movable', icon: <path d="M5 0l2 2H3zM5 10 3 8h4zM0 5l2-2v4zM10 5 8 7V3zM3.500 3.500h3v3h-3z" fill="none" stroke="#f1e6bd" strokeWidth=".9" /> },
  ];
  return (
    <div className="flex overflow-hidden rounded-[5px]">
      {options.map((o) => (
        <button
          key={o.name}
          aria-pressed={o.name === value}
          onClick={() => setValue(o.name)}
          className={clsx('flex h-[13px] w-[59px] items-center border-r border-[#404040] pl-[3px] text-[8px]', o.name === value ? 'bg-[#b9850a] text-[#1c1c1c]' : 'bg-[#555] text-[#c8c8c8]')}
        >
          <svg viewBox="0 0 10 10" className="h-2.5 w-2.5 shrink-0" aria-hidden="true">
            {o.icon}
          </svg>
          <span className="flex-1 text-center">{o.name}</span>
        </button>
      ))}
    </div>
  );
}

function Separator() {
  return <div className="mr-2.5 h-[7px] border-y-[3px] border-[#404040] bg-gradient-to-r from-transparent via-[#222] to-transparent" />;
}

function Expander() {
  return (
    <button aria-label="Hide advanced" className="-mb-2 flex h-[11px] w-full items-center justify-center bg-[#464646] pt-1">
      <svg viewBox="0 0 8 5" className="mr-2.5 h-[5px] w-2" fill="#8a8a8a" aria-hidden="true">
        <path d="M4 0 8 4.500H0z" />
      </svg>
    </button>
  );
}

function Details() {
  return (
    <aside className="flex w-80 shrink-0 flex-col pl-0.5 pr-px pt-px">
      <PanelTab
        icon={
          <svg viewBox="0 0 10 10" className="h-2.5 w-2.5" aria-hidden="true">
            <circle cx="5" cy="4.500" r="4" fill="#46639c" />
            <path d="M5 2v1M5 4v3" stroke="#fff" strokeWidth="1.400" />
            <path d="M1 9.300h8" stroke="#24365c" strokeWidth="1.200" />
          </svg>
        }
        label="Details"
        className="ml-0.5"
      />
      <div className="flex-1 border border-[#707070] bg-[#626262]">
        <div className="flex items-center gap-1.5 px-0.5 pb-[3px] pt-0.5">
          <div className="relative flex flex-1">
            <input type="search" aria-label="Search details" placeholder="Search Details" className="h-3 w-full bg-[#c6c6c6] pl-1 text-[9px] text-black placeholder:text-[#808080]" />
            <Magnifier className="absolute right-px top-px h-2.5 w-2.5" />
          </div>
          <button aria-label="Property matrix" className="flex h-3 w-[17px] items-center justify-center bg-[#dcdcdc]">
            <svg viewBox="0 0 10 10" className="h-2.5 w-2.5" fill="#8e8e8e" aria-hidden="true">
              <path d="M0 0h2.600v10H0zM3.600 0h2.600v10H3.600zM7.200 0h2.600v10H7.200z" />
            </svg>
          </button>
          <button aria-label="View options" className="flex items-center gap-0.5 text-[#aaa]">
            <EyeIcon className="h-2 w-3" />
            <Caret />
          </button>
        </div>
        <div className="flex flex-col gap-0.5">
          <DetailSection title="Transform">
            <Row label="Location" htmlFor="location" menu>
              <VectorField id="location" value="0.0" />
            </Row>
            <Row label="Rotation" htmlFor="rotation" menu>
              <VectorField id="rotation" value="0.0 °" spin />
            </Row>
            <Row label="Scale" htmlFor="scale" menu>
              <VectorField id="scale" value="1.0" />
              <svg viewBox="0 0 8 10" className="ml-[5px] h-2.5 w-2" aria-hidden="true">
                <path d="M2 5V2.500Q2 1 4 1t2 1.500V5" fill="none" stroke="#999" strokeWidth="1.200" />
                <path d="M1 5h6v4.500H1z" fill="#999" />
                <path d="M3.500 6h1v2.500h-1z" fill="#444" />
              </svg>
            </Row>
            <Row label="Mobility">
              <Mobility />
            </Row>
          </DetailSection>
          <DetailSection title="Default">
            <Row label="Force" htmlFor="force">
              <NumberField id="force" value="0.0" spin />
            </Row>
          </DetailSection>
          <DetailSection title="Component Tick">
            <Row label="Start with Tick Enabled" htmlFor="tick-enabled">
              <Check id="tick-enabled" />
              <button aria-label="Reset tick enabled" className="ml-1.5">
                <ResetArrow />
              </button>
            </Row>
            <Row label="Tick Interval (secs)" htmlFor="tick-interval">
              <NumberField id="tick-interval" value="0.0" spin />
            </Row>
            <Separator />
            <Row label="Tick Even when Paused" htmlFor="tick-paused">
              <Check id="tick-paused" />
            </Row>
            <Row label="Allow Tick on Dedicated Server" htmlFor="tick-server">
              <Check id="tick-server" on />
            </Row>
            <Row label="Tick Group" htmlFor="tick-group">
              <span className="relative flex">
                <select id="tick-group" className="h-[13px] w-[69px] appearance-none bg-gradient-to-b from-[#e2e2e2] to-[#b4b4b4] pl-[3px] text-[8px] text-[#111]">
                  <option>Pre Physics</option>
                </select>
                <Caret className="pointer-events-none absolute right-1 top-[5px] text-black" />
              </span>
              <button aria-label="Reset tick group" className="ml-1.5">
                <ResetArrow />
              </button>
            </Row>
            <Expander />
          </DetailSection>
          <DetailSection title="Rendering">
            <Row label="Visible" htmlFor="visible">
              <Check id="visible" on />
            </Row>
            <Row label="Hidden in Game" htmlFor="hidden">
              <Check id="hidden" />
            </Row>
            <Separator />
            <Row label="Use Attach Parent Bound" htmlFor="parent-bound">
              <Check id="parent-bound" />
            </Row>
            <Expander />
          </DetailSection>
          <DetailSection title="Tags">
            <Row label="Component Tags" className="h-[18px]">
              <span className="w-[75px] text-[#c8c8c8]">0 Array elements</span>
              <button aria-label="Add element">
                <Plus />
              </button>
              <button aria-label="Empty array" className="ml-2">
                <svg viewBox="0 0 8 9" className="h-[9px] w-2" aria-hidden="true">
                  <path d="M2.500 1h3M.5 2.200h7" stroke="#ccc" strokeWidth="1.100" />
                  <path d="M1 3h6l-.5 6h-5z" fill="#ccc" />
                  <path d="M3 4v4M5 4v4" stroke="#555" strokeWidth=".7" />
                </svg>
              </button>
            </Row>
          </DetailSection>
          <DetailSection title="Component Replication">
            <Row label="Component Replicates" htmlFor="replicates">
              <Check id="replicates" />
            </Row>
          </DetailSection>
          <DetailSection title="Activation">
            <Row label="Auto Activate" htmlFor="activate">
              <Check id="activate" />
            </Row>
          </DetailSection>
          <DetailSection title="Variable">
            <Row label="Editable when Inherited" htmlFor="editable">
              <Check id="editable" on />
            </Row>
          </DetailSection>
          <DetailSection title="Cooking">
            <Row label="Is Editor Only" htmlFor="editor-only">
              <Check id="editor-only" />
            </Row>
          </DetailSection>
          <DetailSection title="Physics" collapsed />
          <DetailSection title="LOD" collapsed />
          <DetailSection title="Asset User Data" collapsed />
          <DetailSection title="Collision" collapsed />
        </div>
      </div>
    </aside>
  );
}

export default function App() {
  return (
    <div className="relative flex h-screen flex-col overflow-hidden bg-[#222] font-['Roboto',sans-serif] text-[#c8c8c8]">
      <TitleBar />
      <MenuBar />
      <div className="flex min-h-0 flex-1">
        <MyBlueprint />
        <div className="flex min-w-0 flex-1 flex-col pb-px pl-[3px] pr-0.5 pt-px">
          <Toolbar />
          <GraphTabs />
          <GraphCanvas />
          <CompilerResults />
        </div>
        <Details />
      </div>
      <p className="pointer-events-none absolute bottom-0.5 right-0 whitespace-nowrap font-['Noto_Sans_CJK_SC',sans-serif] text-[98px] font-bold leading-[98px] text-black">海盗王CG资源</p>
    </div>
  );
}
